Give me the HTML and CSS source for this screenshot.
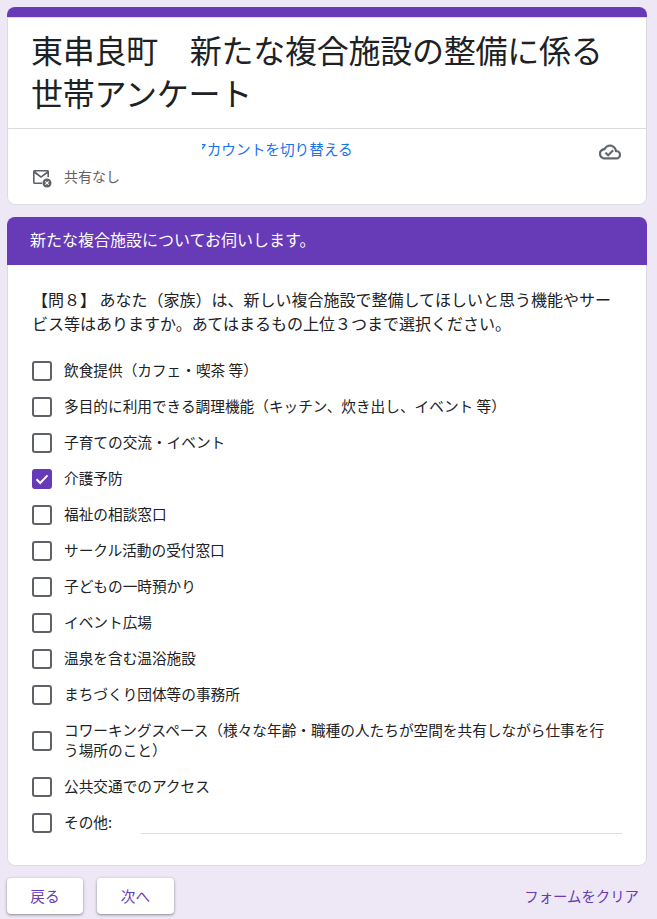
FILE: index.html
```html
<!DOCTYPE html>
<html lang="ja">
<head>
  <meta charset="UTF-8" />
  <title>東串良町 新たな複合施設の整備に係る世帯アンケート</title>
  <link rel="stylesheet" href="styles.css">
</head>
<body>
  <div class="card head-card">
    <h1>東串良町　新たな複合施設の整備に係る世帯アンケート</h1>
    <div class="account">
      <div class="account-text">
        <div class="switch"><a class="switch-link">アカウントを切り替える</a></div>
        <div class="share">
          <svg class="mail-icon" width="20" height="20" viewBox="0 0 20 20">
            <path d="M2.500 2h13c.8 0 1.500.7 1.500 1.500V9h-1.600V5.500L9 10 2.600 5.500v8.900H10V16H2.500C1.700 16 1 15.300 1 14.500v-11C1 2.700 1.700 2 2.500 2zm.9 1.600L9 8l6-4.400z" fill="#5f6368"/>
            <circle cx="15" cy="15" r="4.500" fill="#5f6368"/>
            <path d="M13.300 13.300l3.400 3.400M16.700 13.300l-3.400 3.400" stroke="#fff" stroke-width="1.100"/>
          </svg>
          <span>共有なし</span>
        </div>
      </div>
      <svg class="cloud-icon" width="22" height="22" viewBox="0 0 24 24">
        <path fill="#5f6368" stroke="#5f6368" stroke-width=".4" d="M19.35 10.04C18.67 6.59 15.64 4 12 4 9.11 4 6.6 5.64 5.35 8.04 2.34 8.36 0 10.91 0 14c0 3.31 2.69 6 6 6h13c2.76 0 5-2.24 5-5 0-2.64-2.05-4.78-4.65-4.96zM19 18H6c-2.21 0-4-1.79-4-4 0-2.05 1.53-3.76 3.56-3.97l1.07-.11.5-.95C8.08 7.14 9.94 6 12 6c2.62 0 4.88 1.86 5.39 4.43l.3 1.5 1.53.11c1.56.1 2.78 1.41 2.78 2.96 0 1.65-1.35 3-3 3zm-9-3.820l-2.090-2.090L6.500 13.500 10 17l6.010-6.010-1.410-1.410z"/>
      </svg>
    </div>
  </div>

  <div class="card section-card">
    <div class="section-title">新たな複合施設についてお伺いします。</div>
    <div class="section-body">
      <p class="question">【問８】 あなた（家族）は、新しい複合施設で整備してほしいと思う機能やサービス等はありますか。あてはまるもの上位３つまで選択ください。</p>
      <div class="options">
        <div class="option"><span class="box"></span><span class="label">飲食提供（カフェ・喫茶 等）</span></div>
        <div class="option"><span class="box"></span><span class="label">多目的に利用できる調理機能（キッチン、炊き出し、イベント 等）</span></div>
        <div class="option"><span class="box"></span><span class="label">子育ての交流・イベント</span></div>
        <div class="option">
          <span class="box checked">
            <svg width="20" height="20" viewBox="0 0 20 20"><path d="M4.500 10.300l3.700 3.700 7.300-7.600" fill="none" stroke="#fff" stroke-width="2"/></svg>
          </span>
          <span class="label">介護予防</span>
        </div>
        <div class="option"><span class="box"></span><span class="label">福祉の相談窓口</span></div>
        <div class="option"><span class="box"></span><span class="label">サークル活動の受付窓口</span></div>
        <div class="option"><span class="box"></span><span class="label">子どもの一時預かり</span></div>
        <div class="option"><span class="box"></span><span class="label">イベント広場</span></div>
        <div class="option"><span class="box"></span><span class="label">温泉を含む温浴施設</span></div>
        <div class="option"><span class="box"></span><span class="label">まちづくり団体等の事務所</span></div>
        <div class="option"><span class="box"></span><span class="label">コワーキングスペース（様々な年齢・職種の人たちが空間を共有しながら仕事を行う場所のこと）</span></div>
        <div class="option"><span class="box"></span><span class="label">公共交通でのアクセス</span></div>
        <div class="option"><span class="box"></span><span class="label other-label">その他:</span><span class="other-line"></span></div>
      </div>
    </div>
  </div>

  <div class="footer">
    <button class="nav-btn">戻る</button>
    <button class="nav-btn">次へ</button>
    <span class="clear">フォームをクリア</span>
  </div>
</body>
</html>
```

FILE: styles.css
```css
html, body { height: 919px; overflow: hidden; }
body { margin: 0; padding: 7px 10px 0 7px; background: #ede7f6; color: #202124; font-family: "Noto Sans CJK JP", "Noto Sans", sans-serif; box-sizing: border-box; }
.card { width: 640px; background: #fff; border-radius: 8px; box-sizing: border-box; box-shadow: 0 0 0 1px #dadce0 inset; }
.head-card { height: 198px; border-top: 10px solid #673ab7; }
h1 { margin: 0; padding: 11px 24px 14px 24px; height: 86px; font-size: 32px; line-height: 43px; font-weight: 400; letter-spacing: -.25px; border-bottom: 1px solid #dadce0; }
.account { display: flex; justify-content: space-between; padding: 0 25px; }
.account-text { flex: 1; }
.switch { margin: 10px 0 0 170px; width: 150px; overflow: hidden; white-space: nowrap; font-size: 14.67px; line-height: 20px; color: #1a73e8; }
.switch-link { display: block; margin-left: -10px; }
.share { display: flex; align-items: flex-start; margin-top: 7px; font-size: 14px; line-height: 20px; color: #5f6368; }
.mail-icon { margin: 2px 12px 0 0; }
.cloud-icon { margin: 12px 1px 0 0; }
.section-card { margin-top: 12px; height: 649px; }
.section-title { height: 48px; padding: 0 23px; background: #673ab7; border-radius: 8px 8px 0 0; color: #fff; font-size: 16px; line-height: 45px; }
.section-body { padding: 22px 25px 0; }
.question { margin: 0; font-size: 16px; line-height: 24px; }
.options { margin-top: 18px; }
.option { display: flex; align-items: center; padding: 8px 0; font-size: 14.67px; line-height: 20px; }
.box { width: 20px; height: 20px; flex: none; margin-right: 12px; border: 2px solid #5f6368; border-radius: 3px; box-sizing: border-box; }
.box.checked { background: #673ab7; border: 0; }
.box svg { display: block; }
.label { flex: 1; padding-right: 6px; transform: translateY(-1px); }
.other-label { flex: none; width: 77px; padding-right: 0; }
.other-line { flex: 1; align-self: flex-end; height: 1px; margin-bottom: -1px; background: #dadce0; }
.footer { display: flex; align-items: center; margin-top: 12px; width: 640px; height: 36px; }
.nav-btn { width: 76px; height: 36px; padding: 0 0 2px; border: 0; border-radius: 4px; background: #fff; color: #673ab7; font: inherit; font-size: 14.67px; box-shadow: 0 1px 2px rgba(60,64,67,.4), 0 1px 3px 1px rgba(60,64,67,.15); }
.nav-btn + .nav-btn { width: 77px; margin-left: 14px; }
.clear { margin: 0 8px 2px auto; font-size: 14.400px; color: #673ab7; }
```
